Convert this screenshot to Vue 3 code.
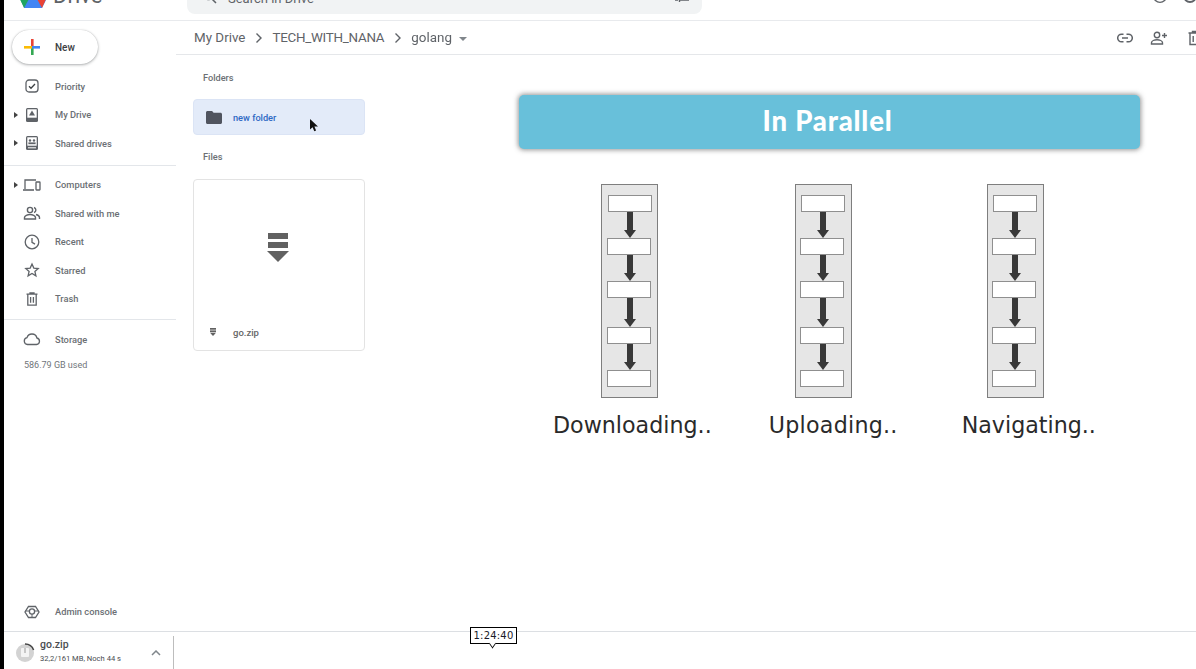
<script setup>
const topItems = [
  { label: 'Priority', icon: 'priority' },
  { label: 'My Drive', icon: 'drive', caret: true },
  { label: 'Shared drives', icon: 'shared', caret: true },
]
const midItems = [
  { label: 'Computers', icon: 'computers', caret: true },
  { label: 'Shared with me', icon: 'people' },
  { label: 'Recent', icon: 'recent' },
  { label: 'Starred', icon: 'star' },
  { label: 'Trash', icon: 'trash' },
]
const flows = [0, 1, 2]
const steps = [
  { gap: 26, x: 0 },
  { gap: 26, x: -1 },
  { gap: 26, x: -1 },
  { gap: 29, x: -1 },
  { gap: 26, x: -1 },
]
const labels = ['Downloading..', 'Uploading..', 'Navigating..']
</script>

<template>
  <div class="page">
    <div class="screen">
      <header class="top">
        <div class="brand">
          <svg class="logo" width="26" height="24" viewBox="0 0 26 24">
            <path d="M9 0 0 15l4 8L13 8z" fill="#1fa463" />
            <path d="M17 0H9l9 15h8z" fill="#ea4335" />
            <path d="M4 16h22l-4 8H4z" fill="#4285f4" />
            <path d="M0 15l4 9 5-9z" fill="#1fa463" />
            <path d="M26 15l-4 9-5-9z" fill="#ea4335" />
            <path d="M13 0h6l3 6h-9z" fill="#fbbc04" />
          </svg>
          <span class="brand-name">Drive</span>
        </div>
        <div class="search">
          <svg class="search-icon" width="14" height="14" viewBox="0 0 14 14" fill="none" stroke="#5f6368" stroke-width="1.5">
            <circle cx="5.5" cy="5.5" r="4" />
            <path d="M8.5 8.5 13 13" />
          </svg>
          <span class="search-text">Search in Drive</span>
          <svg class="tune" width="14" height="14" viewBox="0 0 14 14" stroke="#5f6368" stroke-width="1.4">
            <path d="M0 6h8M10 6h4M8.5 3.5v5M0 11h3M5 11h9M4.5 9v4" fill="none" />
          </svg>
        </div>
        <div class="top-icons">
          <svg width="16" height="16" viewBox="0 0 16 16" fill="none" stroke="#5f6368" stroke-width="1.4">
            <circle cx="8" cy="6" r="6.4" />
            <path d="M8 4v1.500" />
          </svg>
          <svg width="16" height="16" viewBox="0 0 16 16" fill="none" stroke="#5f6368" stroke-width="1.8">
            <circle cx="8" cy="6" r="6" />
          </svg>
        </div>
      </header>

      <div class="body">
        <aside class="side">
          <button class="new-btn">
            <svg width="18" height="18" viewBox="0 0 18 18">
              <rect x="8" y="1" width="2.6" height="8" fill="#ea4335" />
              <rect x="8" y="9" width="2.6" height="8" fill="#34a853" />
              <rect x="1" y="8" width="8" height="2.6" fill="#fbbc04" />
              <rect x="9" y="8" width="8" height="2.6" fill="#4285f4" />
            </svg>
            <span>New</span>
          </button>

          <nav class="nav nav-first">
            <div v-for="item in topItems" :key="item.label" class="nav-row">
              <span class="caret" :class="{ on: item.caret }"></span>
              <span class="nav-icon">
                <svg v-if="item.icon === 'priority'" width="16" height="16" viewBox="0 0 16 16" fill="none" stroke="#5f6368" stroke-width="1.3">
                  <rect x="2" y="2" width="12" height="12" rx="3" />
                  <path d="M5 8.2l2 2 4-4.2" stroke="#3c4043" />
                </svg>
                <svg v-else-if="item.icon === 'drive'" width="16" height="16" viewBox="0 0 16 16">
                  <rect x="2" y="1" width="12" height="14" rx="1.5" fill="#5f6368" />
                  <rect x="3.3" y="2.3" width="9.4" height="8.4" fill="#fff" />
                  <path d="M8 3.5l3 5H5z" fill="#5f6368" />
                </svg>
                <svg v-else width="16" height="16" viewBox="0 0 16 16">
                  <rect x="2" y="1" width="12" height="14" rx="1.5" fill="#5f6368" />
                  <rect x="3.3" y="2.3" width="9.4" height="8.4" fill="#fff" />
                  <circle cx="6" cy="5.5" r="1.2" fill="#5f6368" />
                  <circle cx="10" cy="5.5" r="1.2" fill="#5f6368" />
                  <rect x="4.4" y="7.4" width="7.2" height="1.8" fill="#5f6368" />
                  <rect x="4" y="12.3" width="8" height="1" fill="#fff" />
                </svg>
              </span>
              <span class="nav-label">{{ item.label }}</span>
            </div>
          </nav>

          <div class="rule rule-a"></div>

          <nav class="nav">
            <div v-for="item in midItems" :key="item.label" class="nav-row">
              <span class="caret" :class="{ on: item.caret }"></span>
              <span class="nav-icon">
                <svg v-if="item.icon === 'computers'" width="20" height="16" viewBox="0 0 20 16" fill="none" stroke="#5f6368" stroke-width="1.3">
                  <path d="M3 12V3h11" />
                  <path d="M1 13h11" stroke-width="1.6" />
                  <rect x="14" y="5" width="4" height="8" rx=".5" />
                </svg>
                <svg v-else-if="item.icon === 'people'" width="18" height="16" viewBox="0 0 18 16" fill="none" stroke="#5f6368" stroke-width="1.4">
                  <circle cx="7" cy="5" r="2.6" />
                  <path d="M1.5 14v-1.500c0-1.800 3-3 5.500-3s5.500 1.200 5.500 3V14z" />
                  <path d="M11 2.500a2.600 2.600 0 0 1 0 5M13 9.500c2 .5 3.500 1.500 3.500 3V14" />
                </svg>
                <svg v-else-if="item.icon === 'recent'" width="16" height="16" viewBox="0 0 16 16" fill="none" stroke="#5f6368" stroke-width="1.3">
                  <circle cx="8" cy="8" r="6.800" />
                  <path d="M8 4v4.300l3 1.800" />
                </svg>
                <svg v-else-if="item.icon === 'star'" width="16" height="16" viewBox="0 0 16 16" fill="none" stroke="#5f6368" stroke-width="1.3">
                  <path d="M8 2l1.800 4.100 4.400.4-3.300 2.900 1 4.400L8 11.500l-3.900 2.300 1-4.400L1.800 6.500l4.400-.4z" />
                </svg>
                <svg v-else width="16" height="16" viewBox="0 0 16 16" fill="none" stroke="#5f6368" stroke-width="1.3">
                  <path d="M2.500 3.200h11M6 3V1.800h4V3M3.800 3.500v10.700h8.400V3.500M6.600 6v5.800M9.400 6v5.800" />
                </svg>
              </span>
              <span class="nav-label">{{ item.label }}</span>
            </div>
          </nav>

          <div class="rule rule-b"></div>

          <div class="nav-row storage">
            <span class="caret"></span>
            <span class="nav-icon">
              <svg width="18" height="14" viewBox="0 0 18 14" fill="none" stroke="#5f6368" stroke-width="1.3">
                <path d="M4.500 12.500a3.500 3.500 0 0 1-.5-6.900A5.200 5.200 0 0 1 9 2a5 5 0 0 1 4.900 4 3.300 3.300 0 0 1-.4 6.500z" />
              </svg>
            </span>
            <span class="nav-label">Storage</span>
          </div>
          <div class="used">586.79 GB used</div>

          <div class="nav-row admin">
            <span class="caret"></span>
            <span class="nav-icon">
              <svg width="16" height="16" viewBox="0 0 16 16" fill="none" stroke="#5f6368" stroke-width="1.3">
                <path d="M4.500 2.500h7L15 8l-3.500 5.500h-7L1 8z" />
                <circle cx="8" cy="7.500" r="2.600" />
                <path d="M5.500 7h-4M10.500 7h4M8 10v3.500" stroke-width="1" />
              </svg>
            </span>
            <span class="nav-label">Admin console</span>
          </div>
        </aside>

        <main class="main">
          <div class="crumbs">
            <span class="crumb">My Drive</span>
            <svg class="chev" width="8" height="12" viewBox="0 0 8 12" fill="none" stroke="#5f6368" stroke-width="1.400"><path d="M1.500 1.500 6 6l-4.500 4.500" /></svg>
            <span class="crumb crumb-tight">TECH_WITH_NANA</span>
            <svg class="chev" width="8" height="12" viewBox="0 0 8 12" fill="none" stroke="#5f6368" stroke-width="1.400"><path d="M1.500 1.500 6 6l-4.500 4.500" /></svg>
            <span class="crumb">golang</span>
            <span class="crumb-caret"></span>
            <div class="crumb-actions">
              <svg width="16" height="10" viewBox="0 0 16 10" fill="none" stroke="#5f6368" stroke-width="1.500">
                <path d="M6.500 1.200H4.500a3.800 3.800 0 0 0 0 7.600h2M9.500 1.200h2a3.800 3.800 0 0 1 0 7.600h-2M5 5h6" />
              </svg>
              <svg width="18" height="14" viewBox="0 0 18 14" fill="none" stroke="#5f6368" stroke-width="1.400">
                <circle cx="7" cy="4" r="2.700" />
                <path d="M1.500 13v-1.300c0-1.800 3-2.900 5.500-2.900s5.500 1.100 5.500 2.900V13z" />
                <path d="M14.500 2v5M12 4.500h5" />
              </svg>
              <svg class="crumb-trash" width="14" height="16" viewBox="0 0 14 16" fill="none" stroke="#5f6368" stroke-width="1.400">
                <path d="M.5 3h13M4.500 3V1.500h5V3M2 3.500v11h10v-11M5.200 6v6M8.800 6v6" />
              </svg>
            </div>
          </div>

          <div class="content">
            <section class="files">
              <div class="section-title folders-title">Folders</div>
              <div class="folder">
                <svg width="16" height="13" viewBox="0 0 16 13"><path d="M1.500 0h4.600l1.500 1.700h6.900c.8 0 1.500.7 1.500 1.500v8.300c0 .8-.7 1.500-1.500 1.500h-13C.7 13 0 12.300 0 11.500v-10C0 .7.700 0 1.500 0z" fill="#50545f" /></svg>
                <span>new folder</span>
              </div>
              <div class="section-title files-title">Files</div>
              <div class="card">
                <div class="card-preview">
                  <svg width="22" height="30" viewBox="0 0 22 30" fill="#616161">
                    <rect x="1" y="0" width="20" height="6" />
                    <rect x="1" y="9" width="20" height="6" />
                    <path d="M0 18h22L11 29z" />
                  </svg>
                </div>
                <div class="card-name">
                  <svg width="6" height="8" viewBox="0 0 6 8" fill="#616161"><rect y="0" width="6" height="1.700" /><rect y="2.400" width="6" height="1.700" /><path d="M0 4.800h6L3 8z" /></svg>
                  <span>go.zip</span>
                </div>
              </div>
            </section>

            <section class="slide">
              <div class="banner">In Parallel</div>
              <div class="flows">
                <div v-for="flow in flows" :key="flow" class="flow">
                  <template v-for="(step, i) in steps" :key="i">
                    <svg v-if="i > 0" class="arrow" width="12" :height="step.gap" :viewBox="`0 0 12 ${step.gap}`" fill="#383838">
                      <rect x="3" y="0" width="6" :height="step.gap - 7" />
                      <path :d="`M0 ${step.gap - 8}h12L6 ${step.gap}z`" />
                    </svg>
                    <div class="box" :style="{ transform: `translateX(${step.x}px)` }"></div>
                  </template>
                </div>
              </div>
              <div class="labels">
                <span v-for="label in labels" :key="label" class="label">{{ label }}</span>
              </div>
            </section>
          </div>
        </main>
      </div>

      <footer class="shelf">
        <div class="dl">
          <svg width="20" height="20" viewBox="0 0 20 20">
            <circle cx="10" cy="10" r="9" fill="#d3d3d3" />
            <path d="M10 1a9 9 0 0 1 8.600 6" fill="none" stroke="#444" stroke-width="1.500" />
            <rect x="6" y="5" width="8" height="9" rx="1" fill="#f4f4f4" />
            <rect x="9.500" y="5" width="1" height="5" fill="#999" />
          </svg>
          <div class="dl-text">
            <div class="dl-name">go.zip</div>
            <div class="dl-info">32,2/161 MB, Noch 44 s</div>
          </div>
          <svg class="dl-chev" width="10" height="6" viewBox="0 0 10 6" fill="none" stroke="#80868b" stroke-width="1.500"><path d="M1 5l4-4 4 4" /></svg>
        </div>
      </footer>

      <svg class="cursor" width="10" height="14" viewBox="0 0 10 14">
        <path d="M1 0v10.500l2.600-2.300 1.700 4 1.800-.8-1.700-3.900H9z" fill="#111" />
      </svg>
    </div>

    <div class="stamp">1:24:40</div>
  </div>
</template>

<style scoped>
.page {
  position: relative;
  width: 1196px;
  height: 669px;
  overflow: hidden;
  background: #fff;
}
.screen {
  position: relative;
  display: flex;
  flex-direction: column;
  height: 100%;
  margin-left: 4px;
  background: #fff;
  font-family: Roboto, "Liberation Sans", sans-serif;
  color: #5f6368;
  filter: blur(0.5px);
}
.page::before {
  content: "";
  position: absolute;
  left: 0;
  top: 0;
  bottom: 0;
  width: 4px;
  background: #000;
}

.top {
  display: flex;
  height: 21px;
  flex: none;
  overflow: hidden;
  border-bottom: 1px solid #e8eaed;
  box-sizing: border-box;
}
.brand {
  display: flex;
  align-items: flex-end;
  width: 183px;
  flex: none;
  height: 14px;
  margin-top: -6px;
  padding-left: 16px;
  box-sizing: border-box;
}
.logo {
  flex: none;
}
.brand-name {
  margin-left: 7px;
  font-size: 22px;
  line-height: 24px;
  color: #5f6368;
}
.search {
  display: flex;
  align-items: flex-end;
  width: 515px;
  height: 14px;
  flex: none;
  background: #f1f3f4;
  border-radius: 0 0 8px 8px;
}
.search-icon {
  margin: 0 0 10px 16px;
}
.search-text {
  margin: 0 0 8px 11px;
  font-size: 13px;
  line-height: 15px;
}
.tune {
  margin: 0 13px 11px auto;
}
.top-icons {
  display: flex;
  gap: 14px;
  margin-left: 450px;
  margin-top: -10px;
  height: 16px;
}

.body {
  display: flex;
  flex: 1;
  min-height: 0;
}
.side {
  display: flex;
  flex-direction: column;
  width: 172px;
  flex: none;
}
.new-btn {
  display: flex;
  align-items: center;
  width: 86px;
  height: 34px;
  margin: 9px 0 0 8px;
  padding: 0 0 0 11px;
  border: 0;
  border-radius: 17px;
  background: #fff;
  box-shadow: 0 1px 3px rgba(60, 64, 67, 0.4), 0 0 1px rgba(60, 64, 67, 0.3);
  font: 500 10px Roboto, sans-serif;
  color: #3c4043;
}
.new-btn span {
  margin-left: 14px;
}
.nav-first {
  margin-top: 8px;
}
.nav-row {
  display: flex;
  align-items: center;
  height: 28.5px;
}
.caret {
  width: 0;
  height: 0;
  margin-left: 10px;
  border: 3px solid transparent;
  border-left: 4px solid transparent;
  border-right: 0;
  flex: none;
}
.caret.on {
  border-left-color: #444;
}
.nav-icon {
  display: flex;
  align-items: center;
  justify-content: center;
  width: 20px;
  margin-left: 4px;
  flex: none;
}
.nav-label {
  margin-left: 13px;
  font-size: 9.3px;
  font-weight: 500;
  color: #6b6f74;
  white-space: nowrap;
}
.rule {
  height: 1px;
  background: #e3e6ea;
}
.rule-a {
  margin: 7px 0 5px;
}
.rule-b {
  margin: 6px 0 5px;
}
.storage {
  height: 28px;
}
.used {
  margin: 6px 0 0 20px;
  font-size: 9px;
  line-height: 12px;
  color: #70757a;
}
.admin {
  margin-top: auto;
  margin-bottom: 5px;
}

.main {
  display: flex;
  flex-direction: column;
  flex: 1;
  min-width: 0;
}
.crumbs {
  display: flex;
  align-items: center;
  height: 34px;
  flex: none;
  padding-left: 18px;
  border-bottom: 1px solid #e5e7ea;
  box-sizing: border-box;
}
.crumb {
  font-size: 13.4px;
  color: #5f6368;
  white-space: nowrap;
}
.crumb-tight {
  letter-spacing: -0.27px;
}
.chev {
  margin: 0 9px 0 10px;
}
.crumb-caret {
  width: 0;
  height: 0;
  margin-left: 7px;
  margin-top: 2px;
  border: 4px solid transparent;
  border-top-color: #80868b;
  border-bottom: 0;
}
.crumb-actions {
  display: flex;
  align-items: center;
  gap: 17px;
  margin-left: auto;
  margin-right: -6px;
}
.crumb-trash {
  margin-left: 3px;
}

.content {
  display: flex;
  flex: 1;
  min-height: 0;
}
.files {
  width: 343px;
  flex: none;
  padding-left: 17px;
  box-sizing: border-box;
}
.section-title {
  margin-left: 10px;
  font-size: 9.2px;
  font-weight: 500;
  line-height: 12px;
  color: #6b6f74;
}
.folders-title {
  margin-top: 17px;
}
.folder {
  display: flex;
  align-items: center;
  width: 172px;
  height: 36px;
  margin-top: 15px;
  padding-left: 12px;
  box-sizing: border-box;
  background: #e3ebf9;
  border: 1px solid #dbe4f5;
  border-radius: 4px;
}
.folder span {
  margin-left: 11px;
  font-size: 9.2px;
  font-weight: 500;
  color: #2d68c4;
}
.files-title {
  margin-top: 16px;
}
.card {
  display: flex;
  flex-direction: column;
  width: 172px;
  height: 172px;
  margin-top: 16px;
  box-sizing: border-box;
  border: 1px solid #e3e3e3;
  border-radius: 4px;
}
.card-preview {
  display: flex;
  justify-content: center;
  height: 141px;
  padding: 53px 2px 0 0;
  box-sizing: border-box;
}
.card-name {
  display: flex;
  align-items: center;
  height: 22px;
  padding-left: 16px;
  font-size: 9.500px;
  font-weight: 500;
  color: #666;
}
.card-name span {
  margin-left: 17px;
}

.slide {
  display: flex;
  flex-direction: column;
  flex: none;
}
.banner {
  width: 621px;
  height: 54px;
  margin-top: 40px;
  padding-right: 4px;
  box-sizing: border-box;
  background: #68c0da;
  border-radius: 5px;
  box-shadow: 0 0 5px 1px rgba(60, 60, 60, 0.55);
  color: #fff;
  font: 900 27.5px/52px Lato, sans-serif;
  letter-spacing: 0.8px;
  text-align: center;
}
.flows {
  display: flex;
  gap: 137px;
  margin: 35px 0 0 82px;
}
.flow {
  display: flex;
  flex-direction: column;
  align-items: center;
  width: 57px;
  height: 214px;
  padding-top: 10px;
  box-sizing: border-box;
  background: #e6e6e6;
  border: 1px solid #7e7e7e;
}
.flow:nth-child(n+2) {
  padding-right: 2px;
}
.flow:nth-child(3) {
  margin-left: -2px;
}
.box {
  width: 44px;
  height: 17px;
  flex: none;
  box-sizing: border-box;
  background: #fff;
  border: 1.5px solid #8f8f8f;
}
.arrow {
  display: block;
  flex: none;
}
.labels {
  display: flex;
  margin: 12px 0 0 34px;
}
.label {
  font: 400 22.2px/30px "DejaVu Sans", sans-serif;
  color: #2a2a2a;
  white-space: nowrap;
}
.label:nth-child(2) {
  margin-left: 57px;
  letter-spacing: 0.25px;
}
.label:nth-child(3) {
  margin-left: 64px;
}

.shelf {
  flex: none;
  height: 38px;
  border-top: 1px solid #dcdfe3;
  box-sizing: border-box;
}
.dl {
  display: flex;
  align-items: center;
  width: 170px;
  height: 33px;
  margin-top: 4px;
  padding-left: 11px;
  box-sizing: border-box;
  border-right: 1px solid #bdbdbd;
}
.dl-text {
  margin-left: 5px;
  margin-top: -2px;
}
.dl-name {
  font-size: 10.500px;
  font-weight: 500;
  line-height: 14px;
  color: #4a4d51;
}
.dl-info {
  font-size: 7.600px;
  line-height: 13px;
  color: #4a4d51;
  white-space: nowrap;
}
.dl-chev {
  margin-left: auto;
  margin-right: 12px;
}

.cursor {
  position: absolute;
  left: 305px;
  top: 119px;
}
.stamp {
  position: absolute;
  left: 470px;
  top: 627px;
  width: 47px;
  height: 17px;
  box-sizing: border-box;
  border: 1px solid #000;
  background: #fff;
  color: #1a1a2a;
  font: 10px/15px "DejaVu Sans", sans-serif;
  letter-spacing: 0.2px;
  text-align: center;
}
.stamp::after {
  content: "";
  position: absolute;
  left: 18px;
  top: 12px;
  width: 6px;
  height: 6px;
  background: #fff;
  border-right: 1px solid #000;
  border-bottom: 1px solid #000;
  transform: scaleX(0.7) rotate(45deg);
}
</style>
